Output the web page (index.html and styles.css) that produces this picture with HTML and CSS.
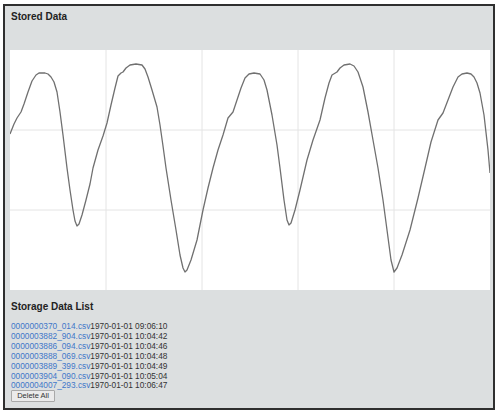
FILE: index.html
```
<!DOCTYPE html>
<html lang="en">
<head>
  <meta charset="UTF-8" />
  <title>Stored Data</title>
  <link rel="stylesheet" href="styles.css">
</head>
<body>
  <div class="panel">
    <h2>Stored Data</h2>
    <div class="chart">
      <svg width="480" height="240" viewBox="0 0 480 240">
        <g class="grid">
          <line x1="96" y1="0" x2="96" y2="240" />
          <line x1="192" y1="0" x2="192" y2="240" />
          <line x1="288" y1="0" x2="288" y2="240" />
          <line x1="384" y1="0" x2="384" y2="240" />
          <line x1="0" y1="80" x2="480" y2="80" />
          <line x1="0" y1="160" x2="480" y2="160" />
        </g>
        <polyline class="wave" points="0,84 4,74 7,68 11,62 14,54 18,42 22,31 26,25 29,23 35,23 38,24 41,27 44,32 47,42 50,62 53,85 57,118 60,140 63,160 65,171 67,176 69,174 72,165 76,150 80,134 83,118 88,100 93,86 97,73 101,55 105,38 108,26 111,23 113,22 116,18 120,15 126,14 132,15 135,19 138,27 142,40 147,57 150,75 153,96 156,118 161,150 166,180 170,205 173,218 175,222 177,220 181,210 187,190 193,160 198,138 203,118 208,100 213,85 218,68 223,62 227,50 231,38 235,28 239,24 244,23 250,24 254,30 257,40 262,65 267,95 270,118 274,150 277,170 279,175 281,173 285,160 290,140 297,110 303,90 310,70 315,48 319,33 322,25 327,22 330,18 334,15 340,14 344,16 348,22 353,37 358,62 363,90 368,118 373,150 377,180 381,210 384,222 387,218 392,205 400,180 408,148 415,118 421,92 428,70 433,63 438,50 443,37 448,27 452,24 457,23 461,24 464,27 467,33 470,43 474,65 478,100 480,123" />
      </svg>
    </div>
    <h2 class="list-title">Storage Data List</h2>
    <ul class="files">
      <li><a href="#">0000000370_014.csv</a>1970-01-01 09:06:10</li>
      <li><a href="#">0000003882_904.csv</a>1970-01-01 10:04:42</li>
      <li><a href="#">0000003886_094.csv</a>1970-01-01 10:04:46</li>
      <li><a href="#">0000003888_069.csv</a>1970-01-01 10:04:48</li>
      <li><a href="#">0000003889_399.csv</a>1970-01-01 10:04:49</li>
      <li><a href="#">0000003904_090.csv</a>1970-01-01 10:05:04</li>
      <li><a href="#">0000004007_293.csv</a>1970-01-01 10:06:47</li>
    </ul>
    <button class="delete">Delete All</button>
  </div>
</body>
</html>
```

FILE: styles.css
```
body {
  margin: 0;
  background: #ffffff;
  font-family: 'Liberation Sans', Arial, sans-serif;
}

.panel {
  box-sizing: border-box;
  width: 492px;
  height: 406px;
  margin: 4px 0 0 3px;
  padding: 0 3px 0 5px;
  background: #dcdfe0;
  border: 2px solid #2f2f2f;
}

h2 {
  margin: 0;
  padding: 5px 0 0 1px;
  height: 44px;
  box-sizing: border-box;
  font-size: 10px;
  line-height: 12px;
  color: #222;
}

.chart {
  width: 480px;
  height: 240px;
  background: #ffffff;
}

.chart svg {
  display: block;
}

.grid line {
  stroke: #e4e4e4;
  stroke-width: 1;
}

.wave {
  fill: none;
  stroke: #707070;
  stroke-width: 1.3;
  stroke-linejoin: round;
}

.list-title {
  height: auto;
  padding-top: 11px;
}

.files {
  list-style: none;
  margin: 9px 0 0;
  padding: 0 0 0 1px;
  font-size: 8.3px;
  line-height: 9.9px;
  color: #333;
}

.files a {
  color: #3f77c9;
  text-decoration: none;
}

.delete {
  display: block;
  margin: -1px 0 0 1px;
  padding: 0 5px;
  width: 44px;
  height: 12px;
  font-family: 'Liberation Sans', Arial, sans-serif;
  font-size: 7.5px;
  line-height: 10px;
  color: #333;
  background: #ebebeb;
  border: 1px solid #a9a9a9;
  border-radius: 1px;
}
```
